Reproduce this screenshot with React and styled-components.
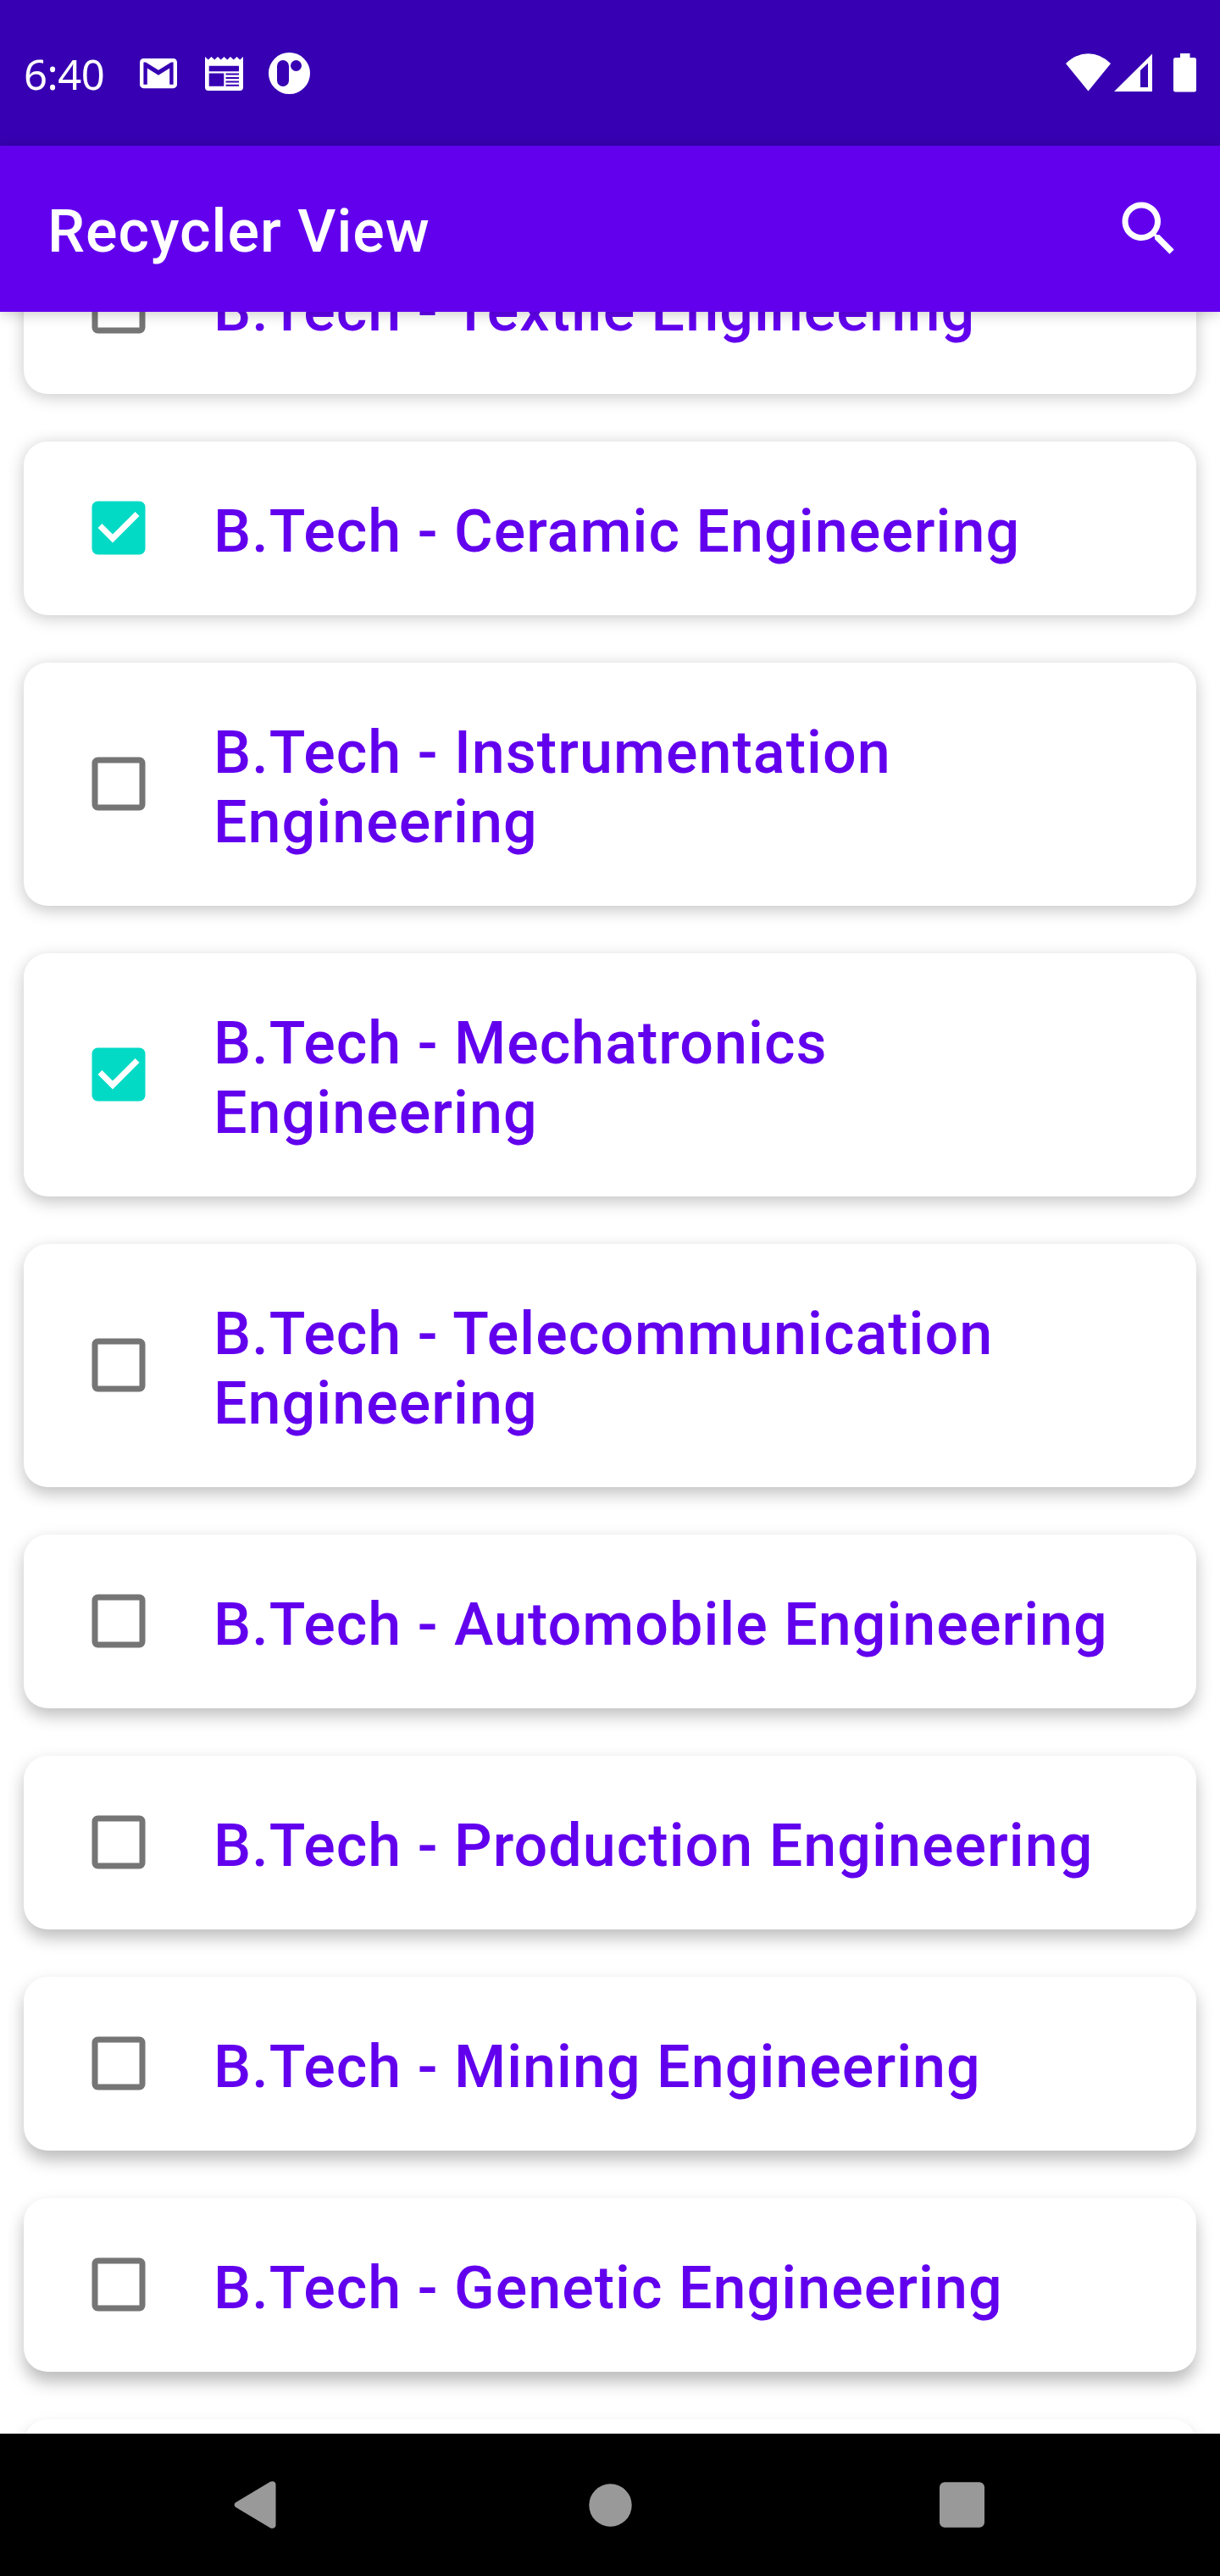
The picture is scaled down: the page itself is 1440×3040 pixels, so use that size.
import React from 'react';
import styled, { createGlobalStyle } from 'styled-components';

const GlobalStyle = createGlobalStyle`
  * { box-sizing: border-box; }
  body { margin: 0; background: #fff; }
`;

const Screen = styled.div`
  width: 1440px;
  height: 3040px;
  display: flex;
  flex-direction: column;
  overflow: hidden;
  background: #fff;
  font-family: Roboto, sans-serif;
`;

const StatusBar = styled.header`
  flex: none;
  height: 172px;
  padding: 0 28px;
  display: flex;
  align-items: center;
  justify-content: space-between;
  background: #3700b3;
  color: #fff;
`;

const StatusGroup = styled.div`
  display: flex;
  align-items: center;
  gap: ${(p) => p.$gap}px;
  padding-top: ${(p) => p.$drop || 0}px;
`;

const Clock = styled.span`
  width: 107px;
  font-family: 'Noto Sans', sans-serif;
  font-size: 49px;
  line-height: 58px;
  letter-spacing: -0.5px;
`;

const AppBar = styled.div`
  flex: none;
  position: relative;
  z-index: 1;
  height: 196px;
  padding: 0 42px 0 56px;
  display: flex;
  align-items: center;
  justify-content: space-between;
  background: #6200ee;
  color: #fff;
  box-shadow: 0 2px 16px rgba(0, 0, 0, 0.21);
`;

const Title = styled.h1`
  margin: 0;
  padding-top: 6px;
  font-size: 70px;
  font-weight: 500;
  line-height: 82px;
  letter-spacing: 1.03px;
`;

const List = styled.main`
  flex: 1;
  min-height: 0;
  overflow: hidden;
  display: flex;
  flex-direction: column;
  justify-content: flex-start;
  gap: 56px;
  padding: 0 28px;
`;

const Card = styled.label`
  flex: none;
  min-height: 205px;
  display: flex;
  align-items: center;
  gap: 70px;
  padding: 0 56px 0 70px;
  border-radius: 28px;
  background: #fff;
  box-shadow: 0 ${(p) => p.$lift}px 19px rgba(0, 0, 0, ${(p) => 0.21 + p.$lift * 0.005});

  &:first-child {
    margin-top: -108px;
  }
`;

const Label = styled.span`
  flex: 1;
  padding: 65px 0 58px;
  color: #6200ee;
  font-size: 70px;
  font-weight: 500;
  line-height: 82px;
  letter-spacing: 1.04px;
`;

const Box = styled.svg`
  flex: none;
  display: block;
  width: 84px;
  height: 84px;
  margin-bottom: 1px;
  fill: ${(p) => (p.$checked ? '#03dac5' : '#757575')};
`;

const Glyph = styled.svg`
  display: block;
  flex: none;
  fill: currentColor;
  overflow: visible;
`;

const NavBar = styled.nav`
  flex: none;
  height: 168px;
  display: grid;
  grid-template-columns: repeat(3, 415.5px);
  justify-content: center;
  align-items: center;
  justify-items: center;
  background: #000;
  color: #999;
`;

const courses = [
  { name: 'Textile', lift: 2.5 },
  { name: 'Ceramic', checked: true, lift: 3 },
  { name: 'Instrumentation', lift: 4.5 },
  { name: 'Mechatronics', checked: true, lift: 6 },
  { name: 'Telecommunication', lift: 7.5 },
  { name: 'Automobile', lift: 8.5 },
  { name: 'Production', lift: 9.5 },
  { name: 'Mining', lift: 10.5 },
  { name: 'Genetic', lift: 11.5 },
];

function Check({ checked }) {
  return (
    <Box viewBox="0 0 24 24" $checked={checked}>
      {checked ? (
        <path
          fillRule="evenodd"
          d="M19 3H5a2 2 0 0 0-2 2v14a2 2 0 0 0 2 2h14a2 2 0 0 0 2-2V5a2 2 0 0 0-2-2zM10 17l-5-5 1.41-1.41L10 14.17l7.59-7.59L19 8z"
        />
      ) : (
        <path
          fillRule="evenodd"
          d="M19 5v14H5V5h14m0-2H5a2 2 0 0 0-2 2v14a2 2 0 0 0 2 2h14a2 2 0 0 0 2-2V5a2 2 0 0 0-2-2z"
        />
      )}
    </Box>
  );
}

export default function App() {
  return (
    <Screen>
      <GlobalStyle />
      <StatusBar>
        <StatusGroup $gap={30} $drop={1}>
          <Clock>6:40</Clock>
          <Glyph width="44" height="35.2" viewBox="2 4 20 16">
            <path d="M20 4H4c-1.1 0-2 .9-2 2v12c0 1.1.9 2 2 2h16c1.1 0 2-.9 2-2V6c0-1.1-.9-2-2-2zm0 14h-2V9.25L12 13 6 9.25V18H4V6h1.2l6.8 4.25L18.8 6H20v12z" />
          </Glyph>
          <Glyph width="48" height="40" viewBox="-3 0 48 40">
            <path
              fillRule="evenodd"
              d="M0 0l3.75 3.5L7.5 0l3.75 3.5L15 0l3.75 3.5L22.5 0l3.75 3.5L30 0l3.75 3.5L37.5 0l3.75 3.5L45 0v36a4 4 0 0 1-4 4H4a4 4 0 0 1-4-4zM4.7 10.7v6.5H40v-6.5zM4.7 19.5v15.2H22.3V19.5zM24.5 19.5v2H40v-2zM24.5 24v2H40v-2zM24.5 28.5v2H40v-2zM24.5 32.7v2H40v-2z"
            />
          </Glyph>
          <Glyph width="49" height="49" viewBox="0 0 49 49">
            <path
              fillRule="evenodd"
              d="M24.5 0a24.5 24.5 0 1 0 0 49a24.5 24.5 0 1 0 0-49zM17 9a7 7 0 0 1 7 7v17a7 7 0 0 1-14 0V16a7 7 0 0 1 7-7zM32.5 9a6.5 6.5 0 1 1 0 13a6.5 6.5 0 1 1 0-13z"
            />
          </Glyph>
        </StatusGroup>
        <StatusGroup $gap={0}>
          <Glyph width="154" height="46" viewBox="1258 63 154 46">
            <path d="M1258 75Q1270 63.2 1284.5 63.2T1311 75L1284.5 107.5z" />
            <path fillRule="evenodd" d="M1360 63.5V108h-45zM1355 74.5l-9 8.5V103h9z" />
            <path d="M1393 63h11.5v5h5a2.5 2.5 0 0 1 2.5 2.5V106a2.5 2.5 0 0 1-2.5 2.5h-22a2.5 2.5 0 0 1-2.5-2.5V70.5a2.5 2.5 0 0 1 2.5-2.5h5.5z" />
          </Glyph>
        </StatusGroup>
      </StatusBar>
      <AppBar>
        <Title>Recycler View</Title>
        <Glyph width="84" height="84" viewBox="0 0 24 24">
          <path d="M15.5 14h-.79l-.28-.27C15.41 12.59 16 11.11 16 9.5 16 5.91 13.09 3 9.5 3S3 5.91 3 9.5 5.91 16 9.5 16c1.61 0 3.09-.59 4.23-1.57l.27.28v.79l5 4.99L20.49 19l-4.99-5zm-6 0C7.01 14 5 11.99 5 9.5S7.01 5 9.5 5 14 7.01 14 9.5 11.99 14 9.5 14z" />
        </Glyph>
      </AppBar>
      <List>
        {courses.map((c) => (
          <Card key={c.name} $lift={c.lift}>
            <Check checked={c.checked} />
            <Label>B.Tech - {c.name} Engineering</Label>
          </Card>
        ))}
        <Card $lift={12} />
      </List>
      <NavBar>
        <Glyph width="58" height="56" viewBox="0 0 58 56">
          <path d="M43 .8C46 -.8 49.5 .8 49.5 4V52C49.5 55.2 46 56.8 43 55.2L2.5 31C0 29.5 0 26.5 2.5 25z" />
        </Glyph>
        <Glyph width="51" height="51" viewBox="0 0 51 51">
          <circle cx="25.5" cy="25.5" r="25.2" />
        </Glyph>
        <Glyph width="54" height="54" viewBox="0 0 54 54">
          <rect x="0" y="0.2" width="53" height="53.6" rx="6" />
        </Glyph>
      </NavBar>
    </Screen>
  );
}
